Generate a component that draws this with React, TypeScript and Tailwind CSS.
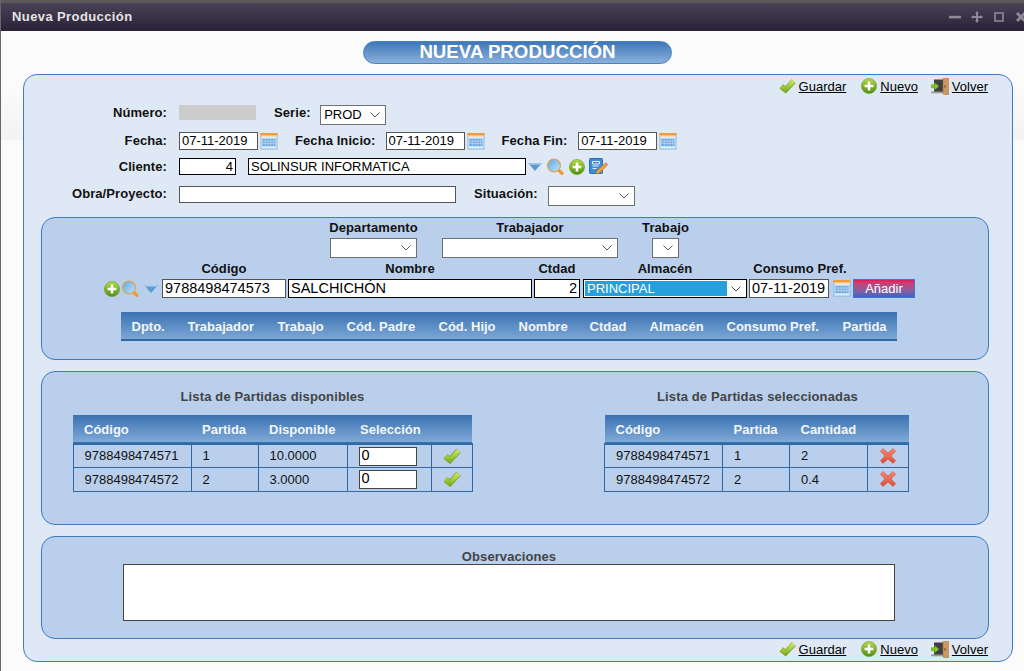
import type { ReactNode } from 'react'

const CheckIcon = ({ className = 'w-[17px] h-[16px]' }: { className?: string }) => (
    <svg viewBox="0 0 18 16" className={className}>
        <defs>
            <linearGradient id="chk" gradientUnits="userSpaceOnUse" x1="0" y1="0" x2="0" y2="16">
                <stop offset="0" stopColor="#d8f070" />
                <stop offset="1" stopColor="#6fa80c" />
            </linearGradient>
        </defs>
        <path d="M2.4 8.4 6.9 12 15.6 2.8" fill="none" stroke="#6f9a22" strokeWidth="5.8" strokeLinejoin="miter" />
        <path d="M2.4 8.4 6.9 12 15.6 2.8" fill="none" stroke="url(#chk)" strokeWidth="4.6" strokeLinejoin="miter" />
    </svg>
)

const PlusIcon = () => (
    <svg viewBox="0 0 16 16" className="h-[16px] w-[16px] shrink-0">
        <defs>
            <linearGradient id="plus" x1="0" y1="0" x2="0" y2="1">
                <stop offset="0" stopColor="#b4d84a" />
                <stop offset="1" stopColor="#4f8f10" />
            </linearGradient>
        </defs>
        <circle cx="8" cy="8" r="7.6" fill="url(#plus)" stroke="#6b9a2a" strokeWidth="0.6" />
        <path d="M8 3.6v8.8M3.6 8h8.8" stroke="#fff" strokeWidth="2.6" />
    </svg>
)

const LensIcon = () => (
    <svg viewBox="0 0 18 18" className="h-[18px] w-[17px] shrink-0">
        <defs>
            <linearGradient id="lens" x1="0" y1="0" x2="1" y2="1">
                <stop offset="0" stopColor="#5aa6e4" />
                <stop offset="1" stopColor="#c4e6f8" />
            </linearGradient>
        </defs>
        <path d="M12.8 12.8 15.8 15.8" stroke="#ee9a2e" strokeWidth="3.4" strokeLinecap="round" />
        <circle cx="7.4" cy="7.4" r="6.8" fill="url(#lens)" stroke="#d8a45a" strokeWidth="1.3" />
    </svg>
)

const ArrowIcon = () => (
    <svg viewBox="0 0 14 8" className="h-[8px] w-[14px] shrink-0">
        <path d="M0 0H14L7 8Z" fill="#5c9ad2" />
        <path d="M0 0H14L12.6 1.8H1.4Z" fill="#a3c8e8" />
    </svg>
)

const NoteIcon = () => (
    <svg viewBox="0 0 19 17" className="h-[17px] w-[19px] shrink-0">
        <rect x="0.5" y="0.5" width="13" height="15" rx="1" fill="#3d8ad6" stroke="#2c6cb0" />
        <path d="M3.5 3.5h7v2.5h-7zM3.5 8h6M3.5 10.5h4" stroke="#e8f3ff" strokeWidth="1" fill="none" />
        <path d="M7 16 8.2 12.6 15.8 5.4 18.2 7.6 10.4 15Z" fill="#f0a030" stroke="#b87818" strokeWidth="0.5" />
        <path d="M15.8 5.4 17 4.3 19 6.3 18.2 7.6Z" fill="#e070a8" />
    </svg>
)

const DoorIcon = () => (
    <svg viewBox="0 0 18 17" className="h-[17px] w-[18px] shrink-0">
        <rect x="3" y="1.5" width="10" height="13.5" fill="#3d3f42" />
        <rect x="0" y="13.5" width="13" height="1.8" fill="#9a9a96" />
        <path d="M12 0.6 17.6 0v17l-5.6-.8Z" fill="#d09660" stroke="#a86f38" strokeWidth="0.5" />
        <rect x="13.4" y="7.2" width="1.2" height="2.4" fill="#7a4c20" />
        <path d="M0.5 6.8h3.2V4.6l4.3 3.7-4.3 3.7V9.8H.5Z" fill="#86c424" stroke="#5b8f14" strokeWidth="0.5" />
    </svg>
)

const CalendarIcon = () => (
    <svg viewBox="0 0 18 18" className="h-[17px] w-[18px] shrink-0">
        <rect x="0.5" y="0.5" width="17" height="16.5" fill="#dceefb" stroke="#86b6da" />
        <rect x="0" y="0" width="18" height="2.8" fill="#f59a32" />
        <rect x="0" y="2.8" width="18" height="1" fill="#fbd79a" />
        <rect x="2" y="6" width="14" height="8" fill="#6ea6dc" />
        <path d="M5 6v8M8 6v8M11 6v8M14 6v8M2 8.6h14M2 11.2h14" stroke="#c8e0f5" strokeWidth="0.7" />
    </svg>
)

const CrossIcon = () => (
    <svg viewBox="0 0 16 16" className="h-[16px] w-[16px]">
        <defs>
            <linearGradient id="crs" x1="0" y1="0" x2="0" y2="1">
                <stop offset="0" stopColor="#f58a72" />
                <stop offset="1" stopColor="#e04b38" />
            </linearGradient>
        </defs>
        <path d="M3 .6 8 5 13 .6 15.6 3.2 11 8 15.6 12.8 13 15.4 8 11 3 15.4.4 12.8 5 8 .4 3.2Z" fill="url(#crs)" stroke="#c9503e" strokeWidth="0.6" strokeLinejoin="round" />
    </svg>
)

const Chevron = () => (
    <svg viewBox="0 0 10 6" className="pointer-events-none absolute top-1/2 right-[5px] h-[6px] w-[10px] -translate-y-1/2">
        <path d="M0.5 0.5 5 5 9.5 0.5" fill="none" stroke="#444" strokeWidth="0.9" />
    </svg>
)

function Select({ width, value = '' }: { width: string; value?: string }) {
    return (
        <div className={`relative h-[20px] shrink-0 border-[1.5px] border-[#707070] bg-white ${width}`}>
            <div className="pl-[3px] text-[13px] leading-[17px] text-black">{value}</div>
            <Chevron />
        </div>
    )
}

function Field({ className, value = '' }: { className: string; value?: string }) {
    return <input readOnly value={value} className={`shrink-0 bg-white px-[2px] text-black outline-none ${className}`} />
}

function Label({ children, className = '' }: { children: ReactNode; className?: string }) {
    return <span className={`shrink-0 text-[13px] leading-[16px] font-bold tracking-[0.08px] whitespace-nowrap text-[#111] ${className}`}>{children}</span>
}

function ActionLink({ icon, label, className = '' }: { icon: ReactNode; label: string; className?: string }) {
    return (
        <a className={`flex items-center gap-[3px] text-[13px] text-black ${className}`}>
            {icon}
            <span className="leading-[15px] underline">{label}</span>
        </a>
    )
}

function Toolbar({ className = '' }: { className?: string }) {
    return (
        <div className={`flex h-[22px] items-center justify-end pr-[24px] ${className}`}>
            <ActionLink icon={<CheckIcon />} label="Guardar" />
            <ActionLink icon={<PlusIcon />} label="Nuevo" className="ml-[15px]" />
            <ActionLink icon={<DoorIcon />} label="Volver" className="ml-[13px]" />
        </div>
    )
}

const headGradient = 'bg-linear-to-b from-[#3a72b0] to-[#7fa9d8]'

const productHead = [
    { label: 'Dpto.', width: 'w-[56px]' },
    { label: 'Trabajador', width: 'w-[90px]' },
    { label: 'Trabajo', width: 'w-[69px]' },
    { label: 'Cód. Padre', width: 'w-[92px]' },
    { label: 'Cód. Hijo', width: 'w-[80px]' },
    { label: 'Nombre', width: 'w-[71px]' },
    { label: 'Ctdad', width: 'w-[60px]' },
    { label: 'Almacén', width: 'w-[77px]' },
    { label: 'Consumo Pref.', width: 'w-[116px]' },
    { label: 'Partida', width: 'w-[65px]' },
]

function PartidaTable({ head, widths, rows, width, last }: {
    head: string[]
    widths: string[]
    rows: ReactNode[][]
    width: string
    last: ReactNode
}) {
    return (
        <table className={`table-fixed border-collapse text-[13px] ${width}`}>
            <thead>
                <tr className={`h-[29px] border-b-2 border-[#2e69a6] ${headGradient}`}>
                    {head.map((h, i) => (
                        <th key={i} className={`pt-[1px] text-left font-bold whitespace-nowrap text-[#f2f6fb] ${h === 'Selección' ? 'pl-[13px]' : 'pl-[11px]'} ${widths[i]}`}>{h}</th>
                    ))}
                </tr>
            </thead>
            <tbody>
                {rows.map((row, r) => (
                    <tr key={r} className="h-[23.5px]">
                        {row.map((c, i) => (
                            <td key={i} className="border border-[#2e69a6] p-0 pl-[11px] text-[#111]">{c}</td>
                        ))}
                        <td className="border border-[#2e69a6] p-0">
                            <div className="flex justify-center">{last}</div>
                        </td>
                    </tr>
                ))}
            </tbody>
        </table>
    )
}

export default function App() {
    const qty = <Field value="0" className="block h-[19px] w-[58px] border-[1.5px] border-[#444] text-[14.5px]" />

    return (
        <div className="relative h-[671px] w-[1024px] overflow-hidden border-l border-[#666] bg-[#fbfbfb] font-['Liberation_Sans',Arial,sans-serif]">
            {/* faint band behind the form */}
            <div className="absolute inset-x-0 top-[85px] h-[55px] bg-linear-to-b from-[#fbfbfb] to-[#f3f3f3]" />

            <div className="relative flex h-[31px] items-center justify-between border-t-[3px] border-[#5a5a5a] bg-linear-to-b from-[#4a4356] to-[#2a2136] pl-[11px]">
                <span className="text-[13px] font-bold tracking-[0.4px] text-[#e4e4e4]">Nueva Producción</span>
                <div className="-mr-[3px] flex items-center gap-[10px] text-[#8d8a95]">
                    <svg viewBox="0 0 12 12" className="h-[12px] w-[12px]"><path d="M0 4.8h12v2.6H0z" fill="currentColor" /></svg>
                    <svg viewBox="0 0 12 12" className="h-[12px] w-[12px]"><path d="M6 0 8 2.4H7V5h2.6V4L12 6 9.6 8V7H7v2.6h1L6 12 4 9.6h1V7H2.4v1L0 6l2.4-2v1H5V2.4H4Z" fill="currentColor" /></svg>
                    <svg viewBox="0 0 12 12" className="h-[12px] w-[12px]"><path d="M2 2h8v8H2z" fill="none" stroke="currentColor" strokeWidth="1.6" /></svg>
                    <svg viewBox="0 0 12 12" className="h-[12px] w-[12px]"><path d="M2 2 10 10M10 2 2 10" stroke="currentColor" strokeWidth="3" /></svg>
                </div>
            </div>

            <div className="relative mt-[10px] ml-[362px] flex h-[23px] w-[309px] items-center justify-center rounded-full border border-[#4a82bd] bg-linear-to-b from-[#3d78b8] to-[#8ab0dc] text-[18.7px] font-bold text-white">
                NUEVA PRODUCCIÓN
            </div>

            <div className="relative mt-[10px] ml-[22px] h-[588px] w-[990px] rounded-[14px] border border-[#3e7cc0] bg-[#dfe9f5] pl-[17px]">
                <Toolbar className="-ml-[17px]" />

                <div className="mt-[8px] -ml-[17px] flex h-[20px] items-start">
                    <Label className="w-[143px] text-right">Número:</Label>
                    <div className="ml-[12px] h-[15px] w-[77px] bg-[#cccccc]" />
                    <Label className="ml-[18px]">Serie:</Label>
                    <div className="ml-[9.5px]"><Select width="w-[66px]" value="PROD" /></div>
                </div>

                <div className="mt-[7px] -ml-[17px] flex h-[18px] items-center">
                    <Label className="w-[143px] text-right">Fecha:</Label>
                    <Field value="07-11-2019" className="ml-[12px] h-[18px] w-[79px] border-[1.5px] border-[#555] text-[13px]" />
                    <span className="ml-[2px]"><CalendarIcon /></span>
                    <Label className="ml-[17px]">Fecha Inicio:</Label>
                    <Field value="07-11-2019" className="ml-[10px] h-[18px] w-[79px] border-[1.5px] border-[#555] text-[13px]" />
                    <span className="ml-[2px]"><CalendarIcon /></span>
                    <Label className="ml-[17px]">Fecha Fin:</Label>
                    <Field value="07-11-2019" className="ml-[11px] h-[18px] w-[79px] border-[1.5px] border-[#555] text-[13px]" />
                    <span className="ml-[2px]"><CalendarIcon /></span>
                </div>

                <div className="mt-[8px] -ml-[17px] flex h-[17px] items-center">
                    <Label className="w-[143px] text-right">Cliente:</Label>
                    <Field value="4" className="ml-[12px] h-[17px] w-[57px] border border-black text-right text-[13px]" />
                    <Field value="SOLINSUR INFORMATICA" className="ml-[12px] h-[17px] w-[278px] border border-black text-[13px]" />
                    <span className="ml-[2px]"><ArrowIcon /></span>
                    <span className="ml-[5px]"><LensIcon /></span>
                    <span className="ml-[5px]"><PlusIcon /></span>
                    <span className="ml-[4px]"><NoteIcon /></span>
                </div>

                <div className="mt-[11px] -ml-[17px] flex h-[20px] items-start">
                    <Label className="w-[143px] text-right">Obra/Proyecto:</Label>
                    <Field className="ml-[12px] h-[17px] w-[277px] border-[1.5px] border-[#555] text-[13px]" />
                    <Label className="ml-[18px]">Situación:</Label>
                    <div className="ml-[10px]"><Select width="w-[87px]" /></div>
                </div>

                <section className="mt-[11px] h-[143px] w-[948px] rounded-[14px] border border-[#3e7cc0] bg-[#b9cfec]">
                    <div className="mt-[2px] ml-[288px] flex items-start">
                        <div className="flex w-[87px] flex-col items-center gap-[1px]">
                            <Label className="h-[17px]">Departamento</Label>
                            <Select width="w-[87px]" />
                        </div>
                        <div className="ml-[25px] flex w-[176px] flex-col items-center gap-[1px]">
                            <Label className="h-[17px]">Trabajador</Label>
                            <Select width="w-[176px]" />
                        </div>
                        <div className="ml-[34px] flex w-[27px] flex-col items-center gap-[1px]">
                            <Label className="h-[17px]">Trabajo</Label>
                            <Select width="w-[27px]" />
                        </div>
                    </div>

                    <div className="mt-[3px] ml-[62px] flex items-end">
                        <div className="flex h-[19px] w-[58px] items-center">
                            <PlusIcon />
                            <span className="ml-[2px]"><LensIcon /></span>
                            <span className="ml-[5px]"><ArrowIcon /></span>
                        </div>
                        <div className="flex w-[124px] flex-col items-center gap-[2px]">
                            <Label>Código</Label>
                            <Field value="9788498474573" className="h-[19px] w-full border-[1.5px] border-[#555] text-[14.5px]" />
                        </div>
                        <div className="ml-[2px] flex w-[244px] flex-col items-center gap-[2px]">
                            <Label>Nombre</Label>
                            <Field value="SALCHICHÓN" className="h-[19px] w-full border border-black text-[14.5px]" />
                        </div>
                        <div className="ml-[2px] flex w-[46px] flex-col items-center gap-[2px]">
                            <Label>Ctdad</Label>
                            <Field value="2" className="h-[19px] w-full border border-black text-right text-[14.5px]" />
                        </div>
                        <div className="ml-[3px] flex w-[164px] flex-col items-center gap-[2px]">
                            <Label>Almacén</Label>
                            <div className="relative h-[19px] w-full border border-black bg-white p-[1px]">
                                <div className="h-[15px] w-[142px] bg-[#26a0da] pl-[2px] text-[13px] leading-[15px] text-white">PRINCIPAL</div>
                                <Chevron />
                            </div>
                        </div>
                        <div className="ml-[2px] flex w-[102px] flex-col items-center gap-[2px]">
                            <Label>Consumo Pref.</Label>
                            <div className="flex w-full items-center">
                                <Field value="07-11-2019" className="h-[19px] w-[80px] border-[1.5px] border-[#555] text-[14.5px]" />
                                <span className="ml-[4px]"><CalendarIcon /></span>
                            </div>
                        </div>
                        <button className="ml-[2px] h-[19px] w-[62px] border border-[#3a78c8] bg-linear-to-b from-[#e4125c] to-[#3c62c4] text-[13px] leading-none text-white">
                            Añadir
                        </button>
                    </div>

                    <table className={`mt-[14px] ml-[79px] w-[776px] table-fixed border-b-2 border-[#2e69a6] text-[13px] ${headGradient}`}>
                        <thead>
                            <tr className="h-[28px]">
                                {productHead.map((h) => (
                                    <th key={h.label} className={`pt-[2px] pl-[10.5px] text-left font-bold whitespace-nowrap text-[#f2f6fb] ${h.width}`}>{h.label}</th>
                                ))}
                            </tr>
                        </thead>
                    </table>
                </section>

                <section className="mt-[11px] flex h-[154px] w-[948px] items-start rounded-[14px] border border-[#3e7cc0] bg-[#b9cfec] pt-[17px] pl-[31px]">
                    <div className="flex w-[399px] flex-col items-center">
                        <Label className="mb-[10px] tracking-[0.14px] text-[#444]!">Lista de Partidas disponibles</Label>
                        <PartidaTable
                            width="w-[399px]"
                            head={['Código', 'Partida', 'Disponible', 'Selección', '']}
                            widths={['w-[118px]', 'w-[67px]', 'w-[89px]', 'w-[84px]', 'w-[41px]']}
                            rows={[
                                ['9788498474571', '1', '10.0000', qty],
                                ['9788498474572', '2', '3.0000', qty],
                            ]}
                            last={<CheckIcon className="h-[16px] w-[18px]" />}
                        />
                    </div>
                    <div className="ml-[132px] flex w-[305px] flex-col items-start">
                        <Label className="mb-[10px] ml-[53px] tracking-[0.14px] text-[#444]!">Lista de Partidas seleccionadas</Label>
                        <PartidaTable
                            width="w-[304px]"
                            head={['Código', 'Partida', 'Cantidad', '']}
                            widths={['w-[118px]', 'w-[67px]', 'w-[78px]', 'w-[41px]']}
                            rows={[
                                ['9788498474571', '1', '2'],
                                ['9788498474572', '2', '0.4'],
                            ]}
                            last={<CrossIcon />}
                        />
                    </div>
                </section>

                <section className="mt-[11px] h-[103px] w-[948px] rounded-[14px] border border-[#3e7cc0] bg-[#b9cfec] pt-[12px] pl-[81px]">
                    <div className="flex w-[772px] flex-col items-center">
                        <Label className="-mb-[1px] text-[#444]!">Observaciones</Label>
                        <div className="h-[57px] w-full border-[1.5px] border-[#444] bg-white" />
                    </div>
                </section>

                <Toolbar className="-mt-[1px] -ml-[17px]" />
            </div>
        </div>
    )
}
